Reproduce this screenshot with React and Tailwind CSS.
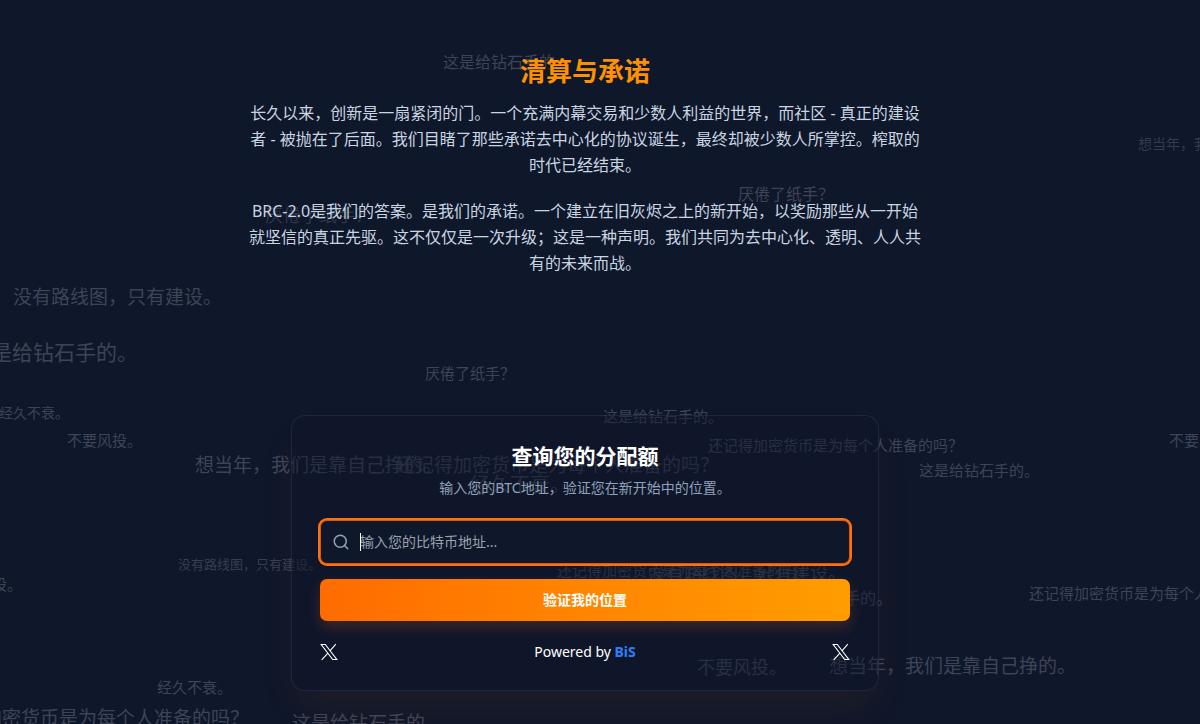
import { Search } from "lucide-react";

const DIAMOND = "这是给钻石手的。";
const OLD_DAYS = "想当年，我们是靠自己挣的。";
const PAPER = "厌倦了纸手？";
const ROADMAP = "没有路线图，只有建设。";
const LASTING = "经久不衰。";
const NO_VC = "不要风投。";
const REMEMBER = "还记得加密货币是为每个人准备的吗？";

const phrases = [
  { text: DIAMOND, place: "left-[443px] top-[50px] text-[16px]" },
  { text: OLD_DAYS, place: "left-[1138px] top-[132px] text-[14px] opacity-80" },
  { text: PAPER, place: "left-[738px] top-[182px] text-[16px]" },
  { text: PAPER, place: "left-[265px] top-[203px] text-[18px] opacity-70" },
  { text: ROADMAP, place: "left-[13px] top-[285px] text-[19px]" },
  { text: DIAMOND, place: "left-[-30px] top-[340px] text-[21px]" },
  { text: PAPER, place: "left-[425px] top-[361px] text-[15px]" },
  { text: LASTING, place: "left-[-1px] top-[401px] text-[14px]" },
  { text: DIAMOND, place: "left-[603px] top-[404px] text-[15px]" },
  { text: NO_VC, place: "left-[67px] top-[428px] text-[15px]" },
  { text: NO_VC, place: "left-[1169px] top-[428px] text-[15px]" },
  { text: REMEMBER, place: "left-[708px] top-[433px] text-[15px]" },
  { text: OLD_DAYS, place: "left-[195px] top-[453px] text-[19px]" },
  { text: REMEMBER, place: "left-[396px] top-[453px] text-[19px] opacity-90" },
  { text: DIAMOND, place: "left-[919px] top-[458px] text-[15px]" },
  { text: LASTING, place: "left-[470px] top-[473px] text-[20px] opacity-90" },
  { text: ROADMAP, place: "left-[178px] top-[552px] text-[13px] opacity-90" },
  { text: REMEMBER, place: "left-[557px] top-[558px] text-[15px]" },
  { text: ROADMAP, place: "left-[648px] top-[560px] text-[18px]" },
  { text: ROADMAP, place: "left-[-143px] top-[572px] text-[15px]" },
  { text: REMEMBER, place: "left-[1029px] top-[581px] text-[15px]" },
  { text: DIAMOND, place: "left-[764px] top-[586px] text-[16px]" },
  { text: NO_VC, place: "left-[697px] top-[655px] text-[18px]" },
  { text: OLD_DAYS, place: "left-[829px] top-[654px] text-[19px]" },
  { text: LASTING, place: "left-[157px] top-[675px] text-[15px]" },
  { text: REMEMBER, place: "left-[-74px] top-[706px] text-[19px]" },
  { text: DIAMOND, place: "left-[292px] top-[711px] text-[19px]" },
];

const XLogo = () => (
  <svg
    viewBox="0 0 18 18"
    fill="none"
    stroke="currentColor"
    strokeWidth="1.1"
    className="w-[18px] h-[18px]"
    aria-hidden="true"
  >
    <path d="M1.2 1.5h4.1l11.5 15h-4.1z" />
    <path d="M15.8 1.2 10 7.8M7.9 10.2 1.7 16.9" />
  </svg>
);

const FloatingPhrases = () => (
  <div className="absolute inset-0 overflow-hidden pointer-events-none select-none" aria-hidden="true">
    {phrases.map((phrase, index) => (
      <span
        key={index}
        className={`absolute whitespace-nowrap leading-[24px] text-[#3e4457] ${phrase.place}`}
      >
        {phrase.text}
      </span>
    ))}
  </div>
);

const Manifesto = () => (
  <section className="w-full max-w-2xl text-center">
    <h1 className="text-[26px] leading-[32px] font-bold text-[#ff9100]">清算与承诺</h1>
    <div className="mt-[13px] space-y-5 text-[16px] leading-[26px] text-slate-300">
      <p>
        长久以来，创新是一扇紧闭的门。一个充满内幕交易和少数人利益的世界，而社区 - 真正的建设者 -
        被抛在了后面。我们目睹了那些承诺去中心化的协议诞生，最终却被少数人所掌控。榨取的时代已经结束。
      </p>
      <p>
        BRC-2.0是我们的答案。是我们的承诺。一个建立在旧灰烬之上的新开始，以奖励那些从一开始就坚信的真正先驱。这不仅仅是一次升级；这是一种声明。我们共同为去中心化、透明、人人共有的未来而战。
      </p>
    </div>
  </section>
);

const AllocationCard = () => (
  <section className="w-full max-w-[588px] rounded-[14px] border border-slate-700/40 bg-slate-900/45 px-7 pt-[26px] pb-7 text-center shadow-[0_22px_44px_-6px_rgba(255,107,0,0.07)]">
    <h2 className="text-[21px] leading-[28px] font-bold text-white">查询您的分配额</h2>
    <p className="mt-2 text-[14px] leading-[20px] text-slate-400">输入您的BTC地址，验证您在新开始中的位置。</p>

    <form className="mt-[22px]" onSubmit={(e) => e.preventDefault()}>
      <div className="relative">
        <label htmlFor="btc-address" className="sr-only">比特币地址</label>
        <Search className="absolute left-3 top-1/2 -translate-y-1/2 w-[18px] h-[18px] text-slate-400" strokeWidth={2} />
        <input
          id="btc-address"
          type="text"
          autoFocus
          placeholder="输入您的比特币地址..."
          className="block w-full h-11 rounded-[7px] border border-[#d65c08] bg-slate-900 pl-[39px] pr-4 pb-[2px] text-[14px] text-white caret-transparent placeholder:text-gray-400 outline-none ring-2 ring-[#ff6f0f]"
        />
        {/* Text cursor */}
        <span className="absolute left-10 top-1/2 -translate-y-1/2 w-px h-[18px] bg-white" aria-hidden="true"></span>
      </div>
      <button
        type="submit"
        className="mt-[15px] block w-full h-[42px] rounded-[7px] bg-linear-to-r from-[#ff6b00] to-[#ff9d00] pb-[2px] text-[14px] font-bold text-white shadow-[0_6px_14px_rgba(255,107,0,0.2)]"
      >
        验证我的位置
      </button>
    </form>

    <div className="mt-[21px] flex items-center justify-between text-[14px] leading-[20px] text-white">
      <a href="#x" aria-label="X"><XLogo /></a>
      <p>
        Powered by <a href="#bis" className="font-bold text-blue-500">BiS</a>
      </p>
      <a href="#bis-x" aria-label="BiS X"><XLogo /></a>
    </div>
  </section>
);

export default function App() {
  return (
    <div className="relative min-h-screen overflow-hidden bg-[#0f172a] font-['Noto_Sans','Noto_Sans_CJK_SC',sans-serif]">
      <FloatingPhrases />
      <main className="relative flex flex-col items-center pt-[55px] pr-[30px] pb-8">
        <Manifesto />
        <div className="mt-[139px] w-full flex justify-center">
          <AllocationCard />
        </div>
      </main>
    </div>
  );
}
